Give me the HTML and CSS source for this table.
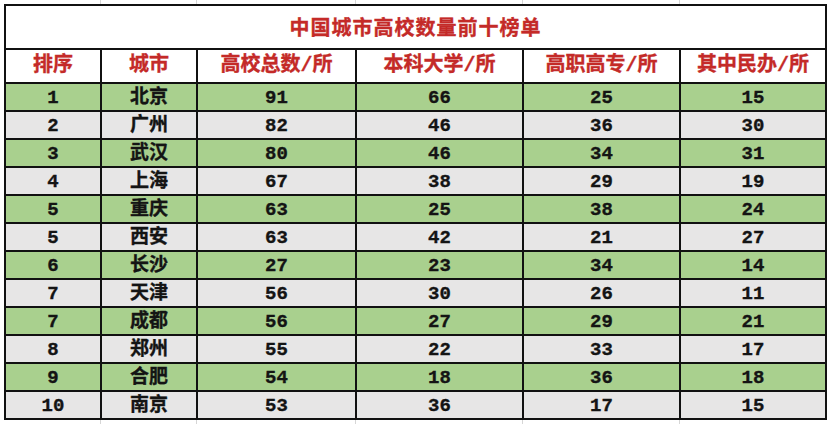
FILE: index.html
```html
<!DOCTYPE html>
<html lang="zh">
<head>
<meta charset="utf-8">
<title>中国城市高校数量前十榜单</title>
<link rel="stylesheet" href="styles.css">
</head>
<body>
<div class="sheet">
<table class="rank">
<colgroup>
<col class="c1"><col class="c2"><col class="c3"><col class="c4"><col class="c5"><col class="c6">
</colgroup>
<thead>
<tr class="title-row"><th colspan="6" class="title">中国城市高校数量前十榜单</th></tr>
<tr class="head-row"><th>排序</th><th>城市</th><th>高校总数/所</th><th>本科大学/所</th><th>高职高专/所</th><th>其中民办/所</th></tr>
</thead>
<tbody>
<tr class="g"><td>1</td><td>北京</td><td>91</td><td>66</td><td>25</td><td>15</td></tr>
<tr class="w"><td>2</td><td>广州</td><td>82</td><td>46</td><td>36</td><td>30</td></tr>
<tr class="g"><td>3</td><td>武汉</td><td>80</td><td>46</td><td>34</td><td>31</td></tr>
<tr class="w"><td>4</td><td>上海</td><td>67</td><td>38</td><td>29</td><td>19</td></tr>
<tr class="g"><td>5</td><td>重庆</td><td>63</td><td>25</td><td>38</td><td>24</td></tr>
<tr class="w"><td>5</td><td>西安</td><td>63</td><td>42</td><td>21</td><td>27</td></tr>
<tr class="g"><td>6</td><td>长沙</td><td>27</td><td>23</td><td>34</td><td>14</td></tr>
<tr class="w"><td>7</td><td>天津</td><td>56</td><td>30</td><td>26</td><td>11</td></tr>
<tr class="g"><td>7</td><td>成都</td><td>56</td><td>27</td><td>29</td><td>21</td></tr>
<tr class="w"><td>8</td><td>郑州</td><td>55</td><td>22</td><td>33</td><td>17</td></tr>
<tr class="g"><td>9</td><td>合肥</td><td>54</td><td>18</td><td>36</td><td>18</td></tr>
<tr class="w"><td>10</td><td>南京</td><td>53</td><td>36</td><td>17</td><td>15</td></tr>
</tbody>
</table>
</div>
</body>
</html>
```
FILE: styles.css
```css
html, body {
  margin: 0;
  padding: 0;
  background: #ffffff;
}
.sheet {
  width: 830px;
  height: 424px;
  box-sizing: border-box;
  padding: 4px 0 0 4px;
  background-color: #ffffff;
  background-image:
    linear-gradient(#d6d6d6, #d6d6d6),
    linear-gradient(#d6d6d6, #d6d6d6),
    linear-gradient(#d6d6d6, #d6d6d6),
    linear-gradient(#d6d6d6, #d6d6d6),
    linear-gradient(#d6d6d6, #d6d6d6);
  background-size: 1px 100%;
  background-repeat: no-repeat;
  background-position: 100px 0, 196px 0, 355px 0, 522px 0, 679px 0;
}
.rank {
  border-collapse: collapse;
  table-layout: fixed;
  width: 821px;
  font-family: "Liberation Mono", "Noto Sans CJK SC", monospace;
  font-weight: bold;
  color: #141414;
  -webkit-text-stroke: 0.35px currentColor;
}
.c1 { width: 96px; }
.c2 { width: 96px; }
.c3 { width: 159px; }
.c4 { width: 167px; }
.c5 { width: 157px; }
.c6 { width: 146px; }
.rank th, .rank td {
  border: 2px solid #111;
  padding: 0;
  text-align: center;
  vertical-align: middle;
  line-height: 1;
}
.title-row { height: 44px; background: #ffffff; }
.title {
  color: #c42a28;
  font-family: "Noto Sans CJK SC", sans-serif;
  font-size: 20px;
  letter-spacing: 1px;
}
.head-row { height: 34px; background: #ffffff; }
.head-row th {
  color: #c42a28;
  font-size: 20px;
}
.rank tbody tr { height: 28px; }
.rank td { font-size: 19px; padding-top: 2px; }
.g { background: #a9d08e; }
.w { background: #e7e6e6; }
```
